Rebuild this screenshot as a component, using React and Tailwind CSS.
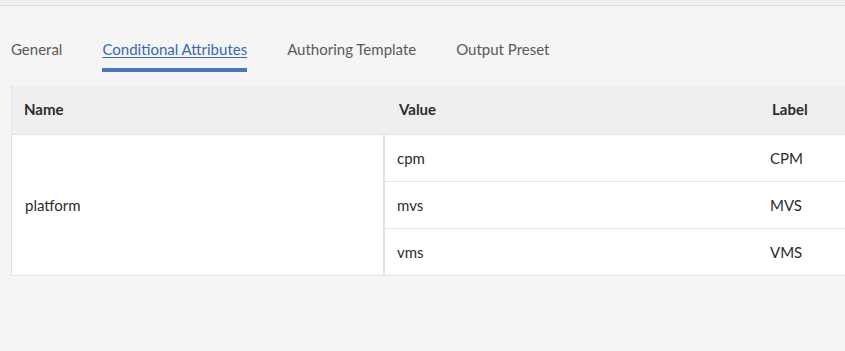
const tabs = ["General", "Conditional Attributes", "Authoring Template", "Output Preset"];

const values = [
    { value: "cpm", label: "CPM" },
    { value: "mvs", label: "MVS" },
    { value: "vms", label: "VMS" },
];

export default function App() {
    return (
        <div className="w-[845px] h-[351px] overflow-hidden bg-[#f5f5f5] text-[#2c2c2c] font-['Lato','Open_Sans',sans-serif]">
            <div className="h-[6px] bg-[#eeeeee] border-b border-[#dedede]" />
            <div className="flex gap-10 pl-[11px] pt-[33px] h-[80px]">
                {tabs.map((t, i) => (
                    <div key={t} className="flex flex-col">
                        <div
                            className={
                                i === 1
                                    ? "text-[15px] leading-5 text-[#3b67b0] underline underline-offset-2"
                                    : "text-[15px] leading-5 text-[#5a5a5a]"
                            }
                        >
                            {t}
                        </div>
                        {i === 1 && <div className="mt-[9px] h-[4px] bg-[#4b78bb]" />}
                    </div>
                ))}
            </div>
            <div className="ml-[11px] w-[900px] border-l border-b border-[#e3e3e3] text-[15px]">
                <div className="flex h-[49px] pb-[2px] items-center bg-[#efefef] border-b border-[#e3e3e3] font-bold">
                    <div className="w-[373px] pl-[12px]">Name</div>
                    <div className="w-[387px] pl-[14px]">Value</div>
                    <div>Label</div>
                </div>
                <div className="flex bg-white">
                    <div className="w-[373px] pl-[13px] flex items-center border-r-2 border-[#e3e3e3]">platform</div>
                    <div className="flex-1">
                        {values.map((v, i) => (
                            <div
                                key={v.value}
                                className={
                                    i < values.length - 1
                                        ? "flex h-[47px] items-center border-b border-[#e6e6e6]"
                                        : "flex h-[46px] items-center"
                                }
                            >
                                <div className="w-[385px] pl-[12px]">{v.value}</div>
                                <div>{v.label}</div>
                            </div>
                        ))}
                    </div>
                </div>
            </div>
        </div>
    );
}
